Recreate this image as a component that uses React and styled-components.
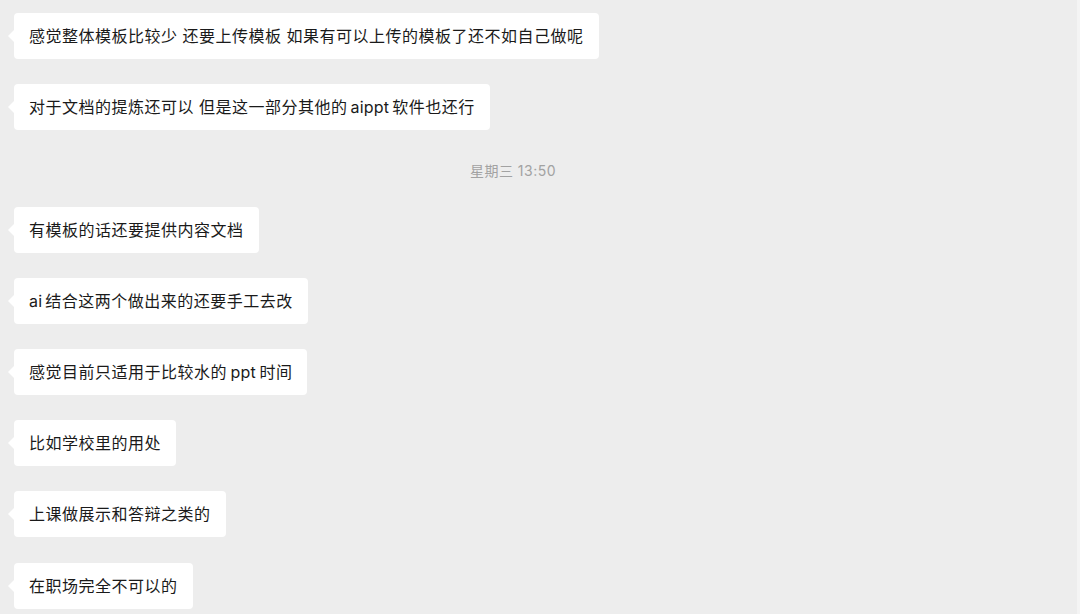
import React from 'react'
import styled, { createGlobalStyle } from 'styled-components'

const GlobalStyle = createGlobalStyle`
  html, body {
    margin: 0;
    padding: 0;
    background: #ededed;
  }
  * {
    box-sizing: border-box;
  }
`

const Chat = styled.div`
  display: flex;
  flex-direction: column;
  align-items: flex-start;
  gap: 25.2px;
  width: 1080px;
  height: 614px;
  overflow: hidden;
  padding: 13px 0 0 14px;
  background: #ededed;
  border-right: 3px solid #f4f4f4;
  font-family: Inter, "Noto Sans CJK SC", sans-serif;
`

const Bubble = styled.div`
  position: relative;
  background: #ffffff;
  color: #1a1a1a;
  font-size: 16px;
  line-height: 22px;
  letter-spacing: 0.5px;
  padding: 12px 15px;
  border-radius: 4px;
  white-space: pre;

  &::before {
    content: '';
    position: absolute;
    left: -6px;
    top: 17px;
    border-top: 6px solid transparent;
    border-bottom: 6px solid transparent;
    border-right: 6px solid #ffffff;
  }
`

// latin words sit between CJK glyphs with a small gap instead of a space
const Latin = styled.span`
  margin-left: ${({ $left = 3 }) => $left}px;
  margin-right: ${({ $right = 3 }) => $right}px;
  letter-spacing: 0.2px;
`

const Time = styled.div`
  align-self: stretch;
  text-align: center;
  padding-right: 65px;
  margin-top: 6px;
  font-size: 14px;
  line-height: 20px;
  letter-spacing: 0.5px;
  color: #a2a2a2;
`

export default function App() {
  return (
    <>
      <GlobalStyle />
      <Chat>
        <Bubble>感觉整体模板比较少 还要上传模板 如果有可以上传的模板了还不如自己做呢</Bubble>
        <Bubble>
          对于文档的提炼还可以 但是这一部分其他的<Latin>aippt</Latin>软件也还行
        </Bubble>
        <Time>星期三 13:50</Time>
        <Bubble>有模板的话还要提供内容文档</Bubble>
        <Bubble>
          <Latin $left={0} $right={3}>ai</Latin>结合这两个做出来的还要手工去改
        </Bubble>
        <Bubble>
          感觉目前只适用于比较水的<Latin $left={3.5} $right={3.5}>ppt</Latin>时间
        </Bubble>
        <Bubble>比如学校里的用处</Bubble>
        <Bubble>上课做展示和答辩之类的</Bubble>
        <Bubble>在职场完全不可以的</Bubble>
      </Chat>
    </>
  )
}
